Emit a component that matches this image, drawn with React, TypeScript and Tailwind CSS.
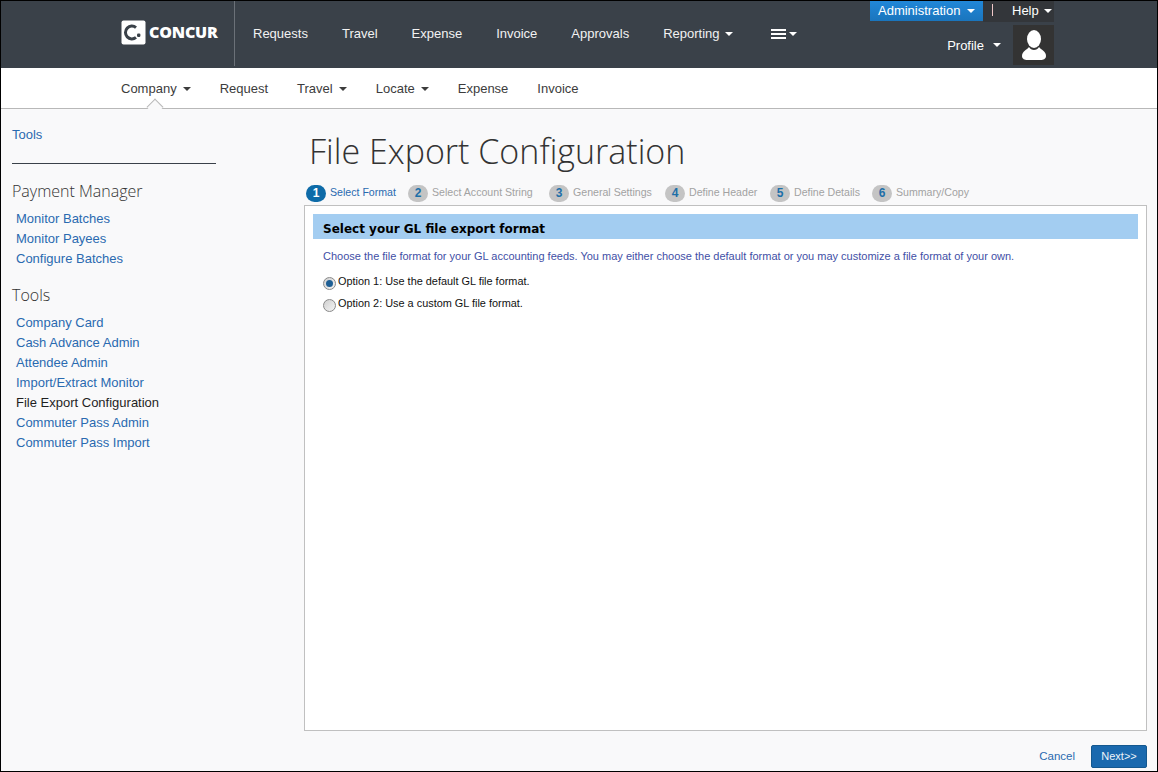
const sans = "font-['Liberation_Sans',Arial,sans-serif]";

const MAIN_NAV = [
  { label: "Requests" },
  { label: "Travel" },
  { label: "Expense" },
  { label: "Invoice" },
  { label: "Approvals" },
  { label: "Reporting", caret: true },
];

const SUB_NAV = [
  { label: "Company", caret: true },
  { label: "Request" },
  { label: "Travel", caret: true },
  { label: "Locate", caret: true },
  { label: "Expense" },
  { label: "Invoice" },
];

const STEPS = [
  "Select Format",
  "Select Account String",
  "General Settings",
  "Define Header",
  "Define Details",
  "Summary/Copy",
];

const PAYMENT_LINKS = ["Monitor Batches", "Monitor Payees", "Configure Batches"];
const TOOL_LINKS = [
  "Company Card",
  "Cash Advance Admin",
  "Attendee Admin",
  "Import/Extract Monitor",
  "File Export Configuration",
  "Commuter Pass Admin",
  "Commuter Pass Import",
];

function Caret({ className = "border-t-white" }: { className?: string }) {
  return (
    <span
      className={`inline-block w-0 h-0 border-x-[4px] border-x-transparent border-t-[4px] ${className}`}
    />
  );
}

function Logo() {
  return (
    <div className="flex items-center gap-[3px] w-[113px] shrink-0 pb-[5px]">
      <svg width="25" height="25" viewBox="0 0 25 25" className="shrink-0">
        <rect x="0.5" y="0.5" width="24" height="24" rx="2" fill="#fff" />
        <path d="M15 7.6 A6.4 6.4 0 1 0 15 17.4" fill="none" stroke="#3a4149" strokeWidth="3" />
        <rect x="16" y="13.5" width="3.4" height="3.4" rx="1.2" fill="#3a4149" />
      </svg>
      <span className="font-['Open_Sans',sans-serif] font-extrabold text-[16px] leading-none text-white tracking-[-0.2px]">
        CONCUR
      </span>
    </div>
  );
}

function Radio({ checked }: { checked?: boolean }) {
  return (
    <span className="w-[13px] h-[13px] rounded-full border border-[#8a8a8a] bg-gradient-to-br from-[#d0d0d0] to-[#f4f4f4] flex items-center justify-center shrink-0 mt-[2px]">
      {checked && <span className="w-[7px] h-[7px] rounded-full bg-[#1f5f94]" />}
    </span>
  );
}

function SideLink({ label }: { label: string }) {
  const current = label === "File Export Configuration";
  return (
    <a className={`block h-[20px] leading-[20px] ${current ? "text-[#1f1f1f]" : "text-[#2a6ab0]"}`}>
      {label}
    </a>
  );
}

export default function App() {
  return (
    <div className={`${sans} w-[1158px] h-[772px] border border-black bg-[#f9f9fa] flex flex-col overflow-hidden text-[13px]`}>
      {/* Top bar */}
      <header className="h-[67px] shrink-0 bg-[#3a4149] flex pl-[120px] text-white">
        <div className="flex items-center h-full">
          <Logo />
          <div className="w-px h-[65px] bg-[#6b7178] mb-[2px]" />
        </div>
        <nav className="flex items-center gap-[34px] pl-[18px] pb-[2px] text-[#f2f2f2]">
          {MAIN_NAV.map((item) => (
            <span key={item.label} className="flex items-center gap-[5px]">
              {item.label}
              {item.caret && <Caret />}
            </span>
          ))}
          <span className="flex items-center gap-[3px] ml-[4px]">
            <span className="flex flex-col gap-[2px] w-[15px]">
              <span className="h-[2px] bg-white" />
              <span className="h-[2px] bg-white" />
              <span className="h-[2px] bg-white" />
            </span>
            <Caret />
          </span>
        </nav>
        <div className="ml-auto mr-[103px] flex flex-col items-end">
          <div className="flex h-[21px]">
            <span className="w-[113px] h-[20px] pl-[8px] flex items-center gap-[7px] bg-gradient-to-b from-[#2187d8] to-[#1a75bd]">
              Administration <Caret />
            </span>
            <span className="w-[71px] bg-[#33363a] flex items-center pl-[9px] pb-[1px]">
              <span className="w-px h-[12px] bg-[#f0c8c8] mb-[3px]" />
              <span className="ml-[19px] mr-[5px]">Help</span>
              <Caret />
            </span>
          </div>
          <div className="flex items-center mt-[3px]">
            <span className="mr-[9px] mt-[1px]">Profile</span>
            <span className="mr-[12px] flex items-center"><Caret /></span>
            <span className="w-[41px] h-[40px] bg-[#333333] flex items-center justify-center">
              <svg width="26" height="30" viewBox="0 0 26 30">
                <ellipse cx="13" cy="9" rx="7" ry="9" fill="#fff" />
                <path d="M8 17 C6 20 1 21 1 26 C1 29 4 30 6 30 L20 30 C22 30 25 29 25 26 C25 21 20 20 18 17 C16 21 10 21 8 17 Z" fill="#fff" />
              </svg>
            </span>
          </div>
        </div>
      </header>

      {/* Sub navigation */}
      <div className="relative h-[41px] shrink-0 bg-white border-b border-[#b8b8b8] flex items-center gap-[29px] pl-[120px] pt-[2px] text-[#3c3c3c]">
        {SUB_NAV.map((item) => (
          <span key={item.label} className="flex items-center gap-[6px]">
            {item.label}
            {item.caret && <Caret className="border-t-[#3c3c3c]" />}
          </span>
        ))}
        <span className="absolute left-[148px] bottom-[-5px] w-[12px] h-[12px] rotate-45 bg-[#f9f9fa] border-l border-t border-[#b8b8b8]" />
      </div>

      {/* Body */}
      <div className="flex-1 flex min-h-0">
        <aside className="w-[303px] shrink-0 pl-[11px] pt-[18px]">
          <a className="block leading-[16px] text-[#2a6ab0]">Tools</a>
          <div className="w-[204px] h-px bg-[#3a4149] mt-[20px]" />
          <h2 className="font-['Open_Sans',sans-serif] font-light text-[16px] leading-[24px] text-[#333] mt-[15px] mb-[6px]">
            Payment Manager
          </h2>
          <div className="pl-[4px]">
            {PAYMENT_LINKS.map((l) => (
              <SideLink key={l} label={l} />
            ))}
          </div>
          <h2 className="font-['Open_Sans',sans-serif] font-light text-[16px] leading-[24px] text-[#333] mt-[14px] mb-[6px]">
            Tools
          </h2>
          <div className="pl-[4px]">
            {TOOL_LINKS.map((l) => (
              <SideLink key={l} label={l} />
            ))}
          </div>
        </aside>

        <main className="w-[843px] flex flex-col">
          <h1 className="font-['Open_Sans',sans-serif] font-light text-[34px] leading-[48px] text-[#333] pl-[5px] pt-[18px] h-[73px] whitespace-nowrap">
            File Export Configuration
          </h1>
          <div className="flex items-center h-[18px] pl-[2px] text-[10.6px] mt-[2px]">
            {STEPS.map((s, i) => (
              <div key={s} className={`flex items-center ${["w-[102px]", "w-[141px]", "w-[116px]", "w-[105px]", "w-[102px]", ""][i]}`}>
                <span className={`w-[20px] h-[17px] rounded-full flex items-center justify-center font-bold text-[12px] mr-[4px] ${i === 0 ? "bg-[#0e6ba8] text-white" : "bg-[#c4c4c4] text-[#1d6fa8]"}`}>
                  {i + 1}
                </span>
                <span className={i === 0 ? "text-[#2a6ab0]" : "text-[#a2a2a2]"}>{s}</span>
              </div>
            ))}
          </div>
          <section className="mt-[3px] h-[526px] bg-white border border-[#c0c0c0] px-[8px] pt-[8px]">
            <div className="h-[25px] bg-[#a3cdf1] pl-[10px] pt-[5px] flex items-center font-['DejaVu_Sans',sans-serif] font-bold text-[12px] text-black">
              Select your GL file export format
            </div>
            <p className="pl-[10px] mt-[11px] text-[11px] leading-[13px] text-[#3f4fa6]">
              Choose the file format for your GL accounting feeds. You may either choose the default format or you may customize a file format of your own.
            </p>
            <div className="pl-[10px] mt-[12px] flex gap-[2px] text-[10.9px] leading-[13px] text-[#111]">
              <Radio checked />
              <span>Option 1: Use the default GL file format.</span>
            </div>
            <div className="pl-[10px] mt-[7px] flex gap-[2px] text-[10.9px] leading-[13px] text-[#111]">
              <Radio />
              <span>Option 2: Use a custom GL file format.</span>
            </div>
          </section>
          <div className="flex items-center justify-end gap-[16px] mt-[14px] text-[11.5px]">
            <a className="text-[#2a6ab0]">Cancel</a>
            <button className="w-[56px] h-[23px] rounded-[2px] bg-[#1a69ae] border border-[#14588f] text-[11px] text-[#eef4fa] flex items-center justify-center">
              Next&gt;&gt;
            </button>
          </div>
        </main>
      </div>
    </div>
  );
}
